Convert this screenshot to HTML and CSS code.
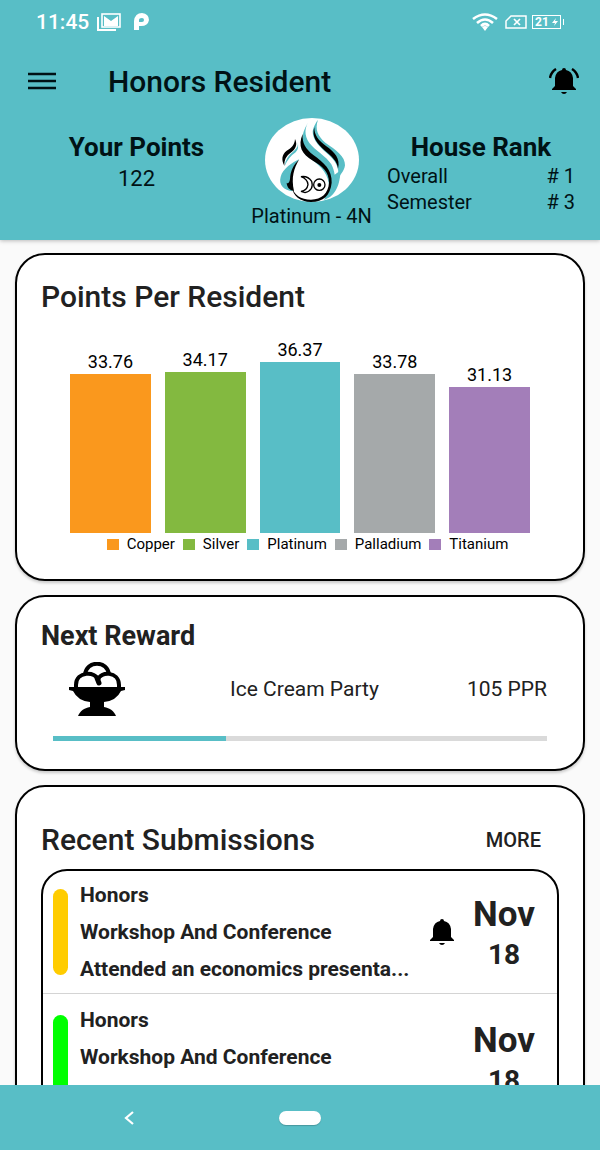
FILE: index.html
```html
<!DOCTYPE html>
<html lang="en">
<head>
<meta charset="utf-8">
<meta name="viewport" content="width=device-width, initial-scale=1">
<title>Honors Resident</title>
<link rel="stylesheet" href="styles.css">
</head>
<body class="app">
<header class="header">
  <div class="status">
    <span class="clock">11:45</span>
    <svg class="status-mail" width="24" height="18" viewBox="0 0 24 18" aria-hidden="true"><path d="M1 4v13h18" fill="none" stroke="#fff" stroke-width="2"/><rect x="5" y="1" width="18" height="13" fill="none" stroke="#fff" stroke-width="1.6"/><path d="M7 3l7 5 7-5v10H7z" fill="#fff"/></svg>
    <svg class="status-p" width="16" height="18" viewBox="0 0 16 18" aria-hidden="true"><path fill="#fff" fill-rule="evenodd" d="M0 17V8Q1 0 8 0Q15 1 15 7Q14 13 7 13L5 13V17ZM5 9H8Q10 9 10 7Q10 5 8 5Q5 5 5 7Z"/></svg>
    <span class="spacer"></span>
    <svg width="26" height="18" viewBox="0 0 26 18" aria-hidden="true"><g fill="none" stroke="#fff" stroke-width="2.6"><path d="M1 6Q13-3 25 6"/><path d="M5 10Q13 3 21 10"/><path d="M9 13Q13 9 17 13"/></g><path d="M10 14Q13 12 16 14L13 18Z" fill="#fff"/></svg>
    <svg class="status-sim" width="22" height="14" viewBox="0 0 22 14" aria-hidden="true"><path d="M6 1H21V13H1V6Z" fill="none" stroke="#fff" stroke-width="1.5"/><path d="M9 4l6 6M15 4l-6 6" stroke="#fff" stroke-width="1.7"/></svg>
    <span class="battery">21<svg width="6" height="8" viewBox="0 0 6 8" aria-hidden="true"><path d="M4 0L0 5H3L2 8L6 3H3Z" fill="#fff"/></svg></span>
  </div>
  <div class="toolbar">
    <button class="icon-button" aria-label="Menu"><svg width="28" height="18" viewBox="0 0 28 18"><path d="M0 2H28M0 9H28M0 16H28" stroke="#001215" stroke-width="2.4"/></svg></button>
    <h1 class="title">Honors Resident</h1>
    <button class="icon-button" aria-label="Notifications"><svg width="30" height="26" viewBox="0 0 30 26"><path d="M3 21L6 18V10Q7 3 13 2Q13 0 15 0Q17 0 17 2Q23 3 24 10V18L27 21V22H3ZM12 24H18Q17 26 15 26Q13 26 12 24Z"/><path d="M1 10Q2 4 7 1M29 10Q28 4 23 1" fill="none" stroke="#000" stroke-width="2.5"/></svg></button>
  </div>
  <div class="stats">
    <section class="points">
      <h2 class="stat-title">Your Points</h2>
      <p class="points-value">122</p>
    </section>
    <section class="house">
      <svg class="crest" width="94" height="84" viewBox="45 24 282 252" preserveAspectRatio="none" role="img" aria-label="Platinum house">
        <ellipse cx="186" cy="150" rx="141" ry="126" fill="#fff"/>
        <path fill="#58bec6" d="M204 29C194 58 203 77 226 98C258 120 286 139 285 166C283 186 268 194 260 213C272 184 262 158 239 137C212 114 188 91 188 65C190 49 199 36 204 29Z"/>
        <path d="M193 51C192 76 207 93 228 108C254 126 272 146 264 176C262 153 244 138 225 122C200 101 184 79 193 51Z"/>
        <path fill="#58bec6" d="M179 30C164 50 161 76 178 99C194 120 229 139 244 163C250 174 252 184 254 194L272 181C270 220 259 259 222 270L238 235C236 192 216 173 184 148C159 131 150 112 157 82C161 58 171 42 179 30Z"/>
        <path d="M158 72C156 100 166 116 190 135C221 157 247 180 245 218C241 256 220 276 183 276C151 275 128 258 126 230C130 253 153 269 183 269C215 268 235 250 237 218C238 187 216 168 190 153C154 132 143 108 158 72Z"/>
        <path fill="#58bec6" d="M143 96C148 117 126 123 112 144Q105 155 104 168Q117 140 137 127Q148 116 143 96ZM148 147C128 157 98 176 92 200C85 225 102 240 128 244L122 224C119 194 127 170 148 147Z"/>
        <path d="M135 87C134 105 123 115 110 122C95 134 94 149 103 167C103 149 108 139 121 129C138 118 143 103 135 87ZM147 149C132 174 123 202 132 243C117 239 111 232 110 218C116 224 119 214 120 207C121 184 130 164 147 149Z"/>
        <path d="M153 200Q174 197 185 214Q193 240 165 248L153 244Q171 242 174 224Q173 207 153 200Z" fill="#fff" stroke="#000" stroke-width="4"/>
        <circle cx="208" cy="224" r="17" fill="none" stroke="#000" stroke-width="4"/><circle cx="208" cy="225" r="6"/>
      </svg>
      <p class="house-name">Platinum - 4N</p>
    </section>
    <section class="rank">
      <h2 class="stat-title">House Rank</h2>
      <dl class="rank-list">
        <div class="rank-row"><dt>Overall</dt><dd># 1</dd></div>
        <div class="rank-row"><dt>Semester</dt><dd># 3</dd></div>
      </dl>
    </section>
  </div>
</header>
<main class="content">
  <section class="card">
    <h2 class="card-title">Points Per Resident</h2>
    <div class="chart">
      <div class="column"><span>33.76</span><div class="bar copper" style="height:159px"></div></div>
      <div class="column"><span>34.17</span><div class="bar silver" style="height:161px"></div></div>
      <div class="column"><span>36.37</span><div class="bar platinum" style="height:171px"></div></div>
      <div class="column"><span>33.78</span><div class="bar palladium" style="height:159px"></div></div>
      <div class="column"><span>31.13</span><div class="bar titanium" style="height:146px"></div></div>
    </div>
    <ul class="legend">
      <li class="key"><i class="swatch copper"></i>Copper</li>
      <li class="key"><i class="swatch silver"></i>Silver</li>
      <li class="key"><i class="swatch platinum"></i>Platinum</li>
      <li class="key"><i class="swatch palladium"></i>Palladium</li>
      <li class="key"><i class="swatch titanium"></i>Titanium</li>
    </ul>
  </section>
  <section class="card">
    <h2 class="reward-title">Next Reward</h2>
    <div class="reward">
      <svg width="56" height="54" viewBox="0 0 56 54" aria-hidden="true"><path d="M16 13C17-2 39-2 40 13L41 24H16Z" fill="#fff" stroke="#000" stroke-width="4"/><path d="M7 27V23C7 9 27 9 29 18C31 9 50 9 50 23V27Z" fill="#fff" stroke="#000" stroke-width="4"/><path d="M28 16L30 21" stroke="#000" stroke-width="5" stroke-linecap="round"/><path d="M0 25H56V28L52 29Q47 39 35 40V45C41 46 45 49 47 54H9C11 49 15 46 21 45V40Q9 39 4 29L0 28Z"/></svg>
      <span class="reward-name">Ice Cream Party</span>
      <span>105 PPR</span>
    </div>
    <div class="progress" role="progressbar" aria-label="Reward progress" aria-valuenow="35" aria-valuemin="0" aria-valuemax="100"><div class="progress-fill" style="width:35%"></div></div>
  </section>
  <section class="card submissions">
    <div class="submissions-head">
      <h2 class="card-title">Recent Submissions</h2>
      <button class="more">MORE</button>
    </div>
    <ul class="list">
      <li class="item">
        <i class="marker pending"></i>
        <div class="details"><p>Honors</p><p>Workshop And Conference</p><p>Attended an economics presenta...</p></div>
        <svg width="24" height="26" viewBox="0 0 24 26" role="img" aria-label="Update"><path d="M0 21L3 18V10Q4 3 10 2Q10 0 12 0Q14 0 14 2Q20 3 21 10V18L24 21V22H0ZM9 24H15Q14 26 12 26Q10 26 9 24Z"/></svg>
        <time class="date"><span class="month">Nov</span><span class="day">18</span></time>
      </li>
      <li class="item">
        <i class="marker approved"></i>
        <div class="details"><p>Honors</p><p>Workshop And Conference</p></div>
        <time class="date"><span class="month">Nov</span><span class="day">18</span></time>
      </li>
    </ul>
  </section>
</main>
<nav class="system-nav">
  <button class="nav-button" aria-label="Back"><svg width="10" height="14" viewBox="0 0 10 14"><path d="M9 1L2 7L9 13" fill="none" stroke="#fff" stroke-width="2.2"/></svg></button>
  <button class="nav-button" aria-label="Home"><span class="home-pill"></span></button>
  <span></span>
</nav>
</body>
</html>
```
FILE: styles.css
```css
* { box-sizing: border-box; }
h1, h2, p, ul, dl, dd { margin: 0; padding: 0; }
ul { list-style: none; }
button { border: 0; padding: 0; background: none; font: inherit; color: inherit; }
svg { display: block; flex: none; }

.app {
  margin: 0;
  height: 100vh;
  display: flex;
  flex-direction: column;
  background: #fafafa;
  color: #212121;
  font-family: Roboto, "Liberation Sans", sans-serif;
  font-size: 20px;
}

.header {
  flex: none;
  height: 240px;
  background: #58bec6;
  color: #001215;
  box-shadow: 0 1px 4px rgba(0, 0, 0, 0.25);
}
.status {
  display: flex;
  align-items: center;
  height: 44px;
  padding: 0 36px;
  color: #fff;
}
.clock { font-size: 21px; font-weight: 500; }
.status-mail { margin-left: 8px; }
.status-p { margin-left: 13px; }
.spacer { flex: 1; }
.status-sim { margin: 0 5px 0 7px; }
.battery {
  position: relative;
  display: flex;
  align-items: center;
  justify-content: center;
  gap: 3px;
  width: 29px;
  height: 14px;
  margin-right: 3px;
  border: 1px solid #fff;
  font-size: 12px;
  font-weight: 700;
}
.battery::after {
  content: "";
  position: absolute;
  right: -4px;
  top: 3px;
  width: 1px;
  height: 6px;
  background: #fff;
}
.toolbar {
  display: flex;
  align-items: center;
  height: 74px;
  padding: 0 21px 0 28px;
}
.title {
  flex: 1;
  margin-left: 52px;
  font-size: 30px;
  font-weight: 500;
}
.stats {
  display: grid;
  grid-template-columns: 225px 1fr 188px;
  padding: 0 25px 0 24px;
}
.points, .rank { padding-top: 13px; }
.points, .house { text-align: center; }
.stat-title {
  font-size: 26px;
  font-weight: 700;
  line-height: 32px;
  text-align: center;
}
.points-value { font-size: 22px; line-height: 32px; }
.house {
  display: flex;
  flex-direction: column;
  align-items: center;
  padding-right: 13px;
  white-space: nowrap;
}
.house-name { line-height: 28px; }
.rank-row {
  display: flex;
  justify-content: space-between;
  line-height: 26px;
}

.content {
  flex: 1;
  min-height: 0;
  display: flex;
  flex-direction: column;
  gap: 14px;
  padding: 13px 15px 0;
  overflow: hidden;
}
.card {
  flex: none;
  padding: 24px;
  border: 2px solid #000;
  border-radius: 30px;
  background: #fff;
  box-shadow: 0 2px 3px rgba(0, 0, 0, 0.2);
}
.card-title {
  font-size: 30px;
  font-weight: 500;
  line-height: 36px;
}
.chart {
  display: flex;
  align-items: flex-end;
  gap: 14px;
  height: 218px;
  padding: 0 29px;
}
.column {
  flex: 1;
  font-size: 18px;
  line-height: 24px;
  color: #000;
  text-align: center;
}
.copper { background: #fa981d; }
.silver { background: #83b940; }
.platinum { background: #58bec6; }
.palladium { background: #a5a9aa; }
.titanium { background: #a37eb9; }
.legend {
  display: flex;
  justify-content: center;
  gap: 8px;
  padding-left: 15px;
  font-size: 15px;
  line-height: 22px;
  color: #000;
}
.key { display: flex; align-items: center; gap: 8px; }
.swatch { width: 12px; height: 11px; }

.reward-title {
  font-size: 27px;
  font-weight: 700;
  line-height: 31px;
}
.reward {
  display: flex;
  align-items: center;
  padding: 10px 12px 0 28px;
  font-size: 21px;
}
.reward-name { flex: 1; text-align: center; padding-left: 17px; }
.progress {
  height: 5px;
  margin: 20px 12px 4px;
  background: #dadada;
}
.progress-fill { height: 100%; background: #58bec6; }

.submissions { padding-top: 35px; }
.submissions-head {
  display: flex;
  justify-content: space-between;
  align-items: center;
  padding-right: 18px;
}
.more { font-weight: 500; }
.list {
  margin-top: 11px;
  border: 2px solid #000;
  border-radius: 26px;
}
.item {
  display: flex;
  align-items: center;
  height: 128px;
  padding: 0 22px 0 10px;
}
.item:first-child { height: 122px; }
.item + .item { border-top: 1px solid #d4d4d4; }
.marker {
  width: 15px;
  height: 86px;
  border-radius: 8px;
}
.pending { background: #fc0; }
.approved { background: #0f0; }
.details {
  flex: 1;
  min-width: 0;
  min-height: 111px;
  margin: 0 12px;
  font-size: 21px;
  font-weight: 700;
  line-height: 37px;
  white-space: nowrap;
}
.date {
  display: flex;
  flex-direction: column;
  align-items: center;
  margin-left: 19px;
  padding-top: 6px;
  font-weight: 700;
  line-height: 40px;
}
.month { font-size: 35px; }
.day { font-size: 28px; }

.system-nav {
  flex: none;
  display: grid;
  grid-template-columns: 1fr 82px 1fr;
  height: 65px;
  padding: 0 109px;
  background: #58bec6;
}
.nav-button { display: flex; align-items: center; justify-content: center; }
.nav-button:first-child { justify-content: flex-start; padding-left: 15px; }
.home-pill {
  width: 42px;
  height: 14px;
  border-radius: 7px;
  background: #fff;
  box-shadow: 0 1px 1px rgba(0, 0, 0, 0.2);
}
```
